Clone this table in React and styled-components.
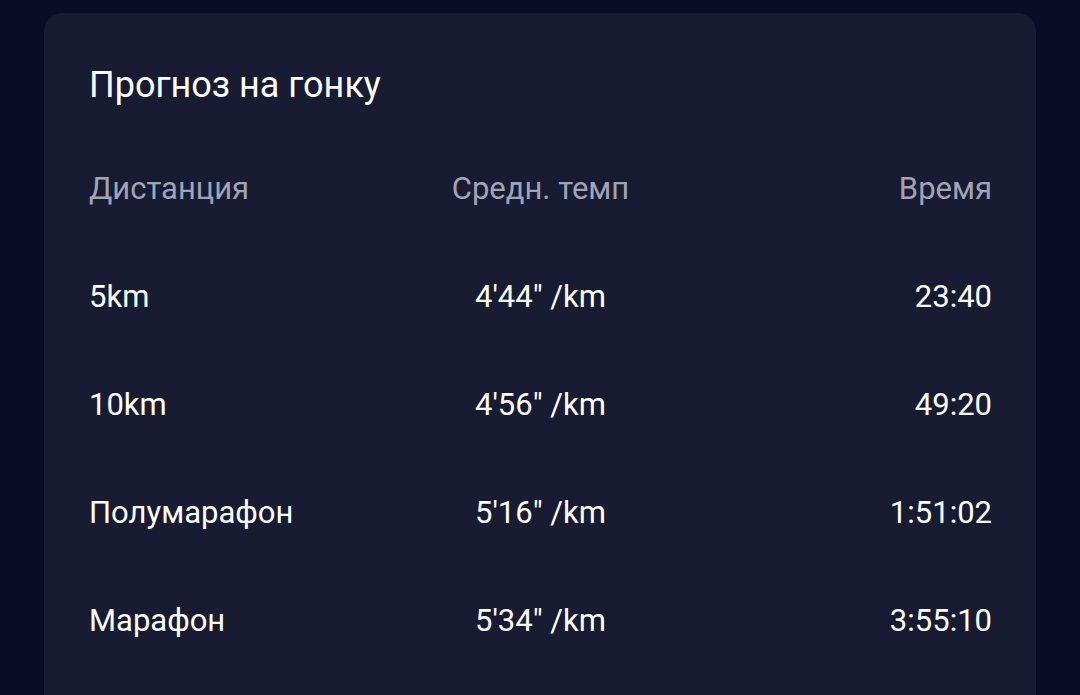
import React from 'react'
import styled, { createGlobalStyle } from 'styled-components'

const GlobalStyle = createGlobalStyle`
  html, body {
    margin: 0;
    padding: 0;
    background: #090d26;
    overflow: hidden;
    font-family: Roboto, 'Noto Sans', sans-serif;
  }
`

const rows = [
  { distance: '5km', pace: `4'44" /km`, time: '23:40' },
  { distance: '10km', pace: `4'56" /km`, time: '49:20' },
  { distance: 'Полумарафон', pace: `5'16" /km`, time: '1:51:02' },
  { distance: 'Марафон', pace: `5'34" /km`, time: '3:55:10' },
]

const App = () => {
  return (
    <Page>
      <GlobalStyle />
      <Card>
        <Title>Прогноз на гонку</Title>
        <Table>
          <Row>
            <Cell $muted>Дистанция</Cell>
            <Cell $muted $align="center">Средн. темп</Cell>
            <Cell $muted $align="right">Время</Cell>
          </Row>
          {rows.map((r) => (
            <Row key={r.distance}>
              <Cell>{r.distance}</Cell>
              <Cell $align="center">{r.pace}</Cell>
              <Cell $align="right">{r.time}</Cell>
            </Row>
          ))}
        </Table>
      </Card>
    </Page>
  )
}

const Page = styled.div`
  width: 1080px;
  height: 695px;
  padding: 13px 44px 0 44px;
  box-sizing: border-box;
`

const Card = styled.section`
  background: #181c33;
  border-radius: 18px;
  height: 720px;
  padding: 50px 44px 0 45px;
  box-sizing: border-box;
`

const Title = styled.h2`
  margin: 0 0 28px;
  color: #ffffff;
  font-size: 36px;
  font-weight: 400;
  line-height: 44px;
`

const Table = styled.div`
  display: flex;
  flex-direction: column;
`

const Row = styled.div`
  display: grid;
  grid-template-columns: 1fr 1fr 1fr;
  align-items: center;
  height: 108px;
`

const Cell = styled.div`
  color: ${(p) => (p.$muted ? '#a0a4b4' : '#ffffff')};
  font-size: 31px;
  line-height: 36px;
  text-align: ${(p) => p.$align || 'left'};
  white-space: nowrap;
`

export default App
